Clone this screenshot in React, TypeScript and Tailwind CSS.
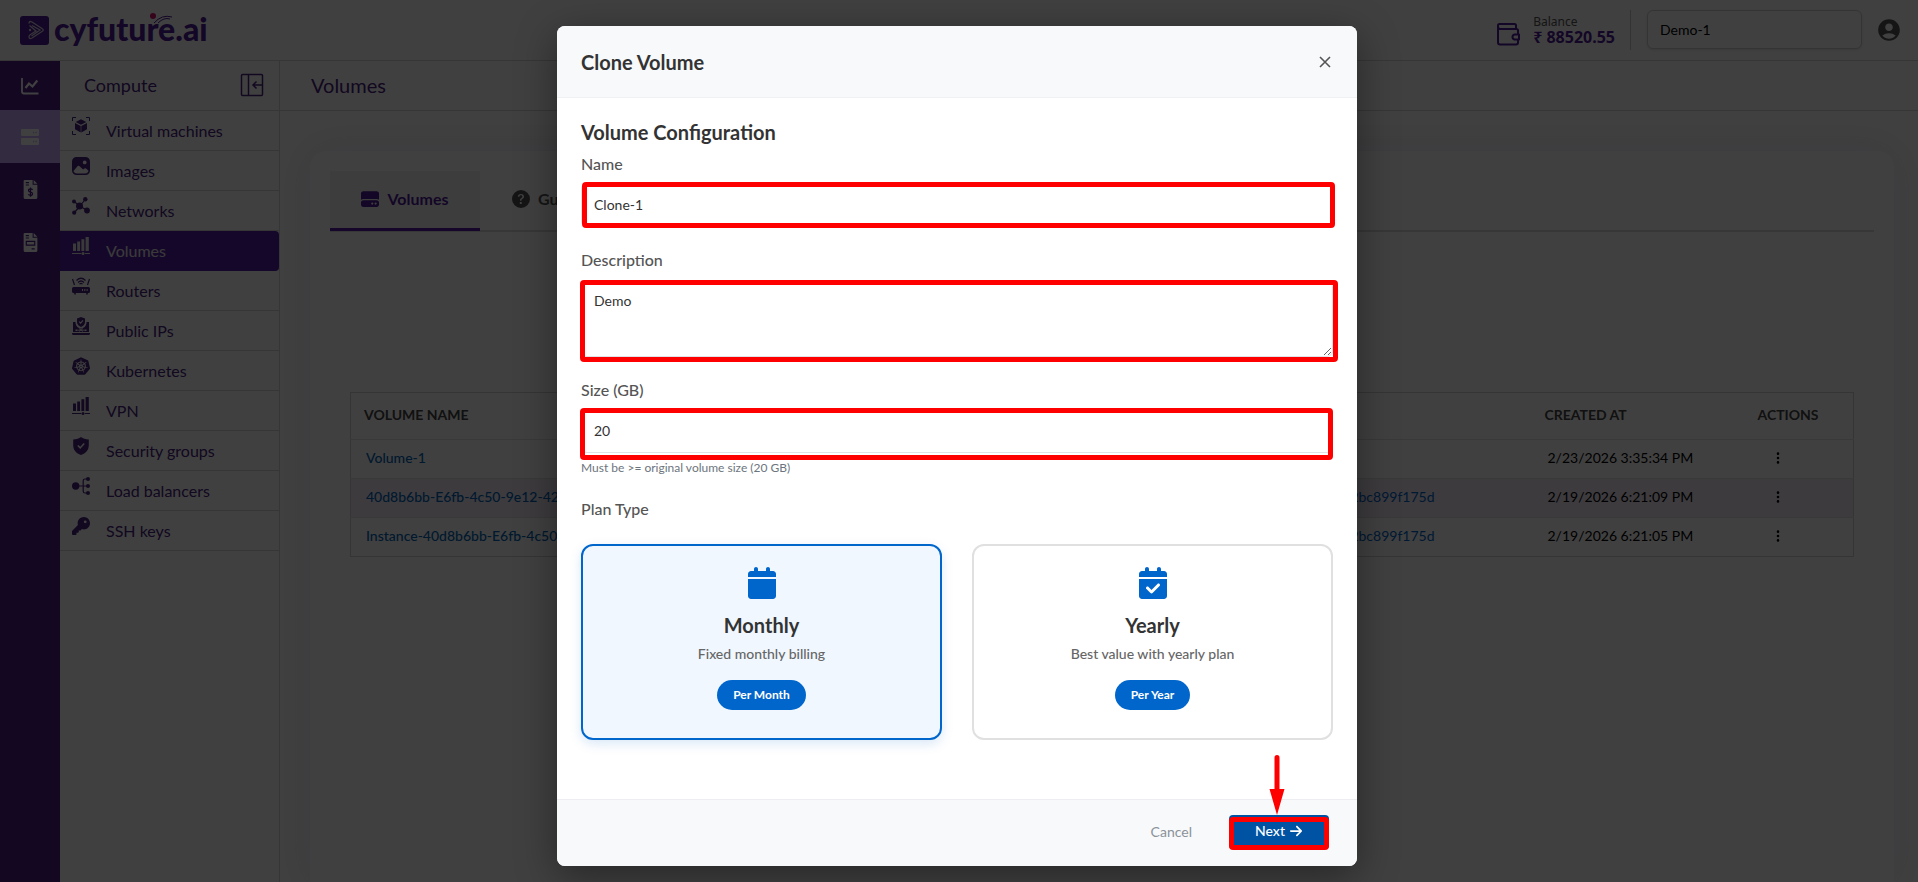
import type { ReactNode } from "react";
import { BsThreeDotsVertical, BsQuestionCircleFill } from "react-icons/bs";
import { FaArrowRight, FaCalendar, FaCalendarCheck, FaHardDrive, FaKey } from "react-icons/fa6";
import { MdAccountCircle } from "react-icons/md";
import { SiKubernetes } from "react-icons/si";

function Svg({ children, size = 18 }: { children: ReactNode; size?: number }) {
  return (
    <svg width={size} height={size} viewBox="0 0 18 18" fill="currentColor" aria-hidden="true">
      {children}
    </svg>
  );
}

const line = { fill: "none", stroke: "currentColor", strokeWidth: 1.2 };

const VmIcon = () => (
  <Svg>
    <path d="M.5 4V.5H4M14 .5h3.500V4M17.500 14v3.500H14M4 17.500H.5V14" {...line} strokeWidth={1} />
    <path d="M9 2.200 14.300 5 9 7.800 3.700 5zM3 6l5.700 2.900v6.600L3 12.300zM15 6 9.300 8.900v6.600l5.700-3.200z" />
  </Svg>
);

const ImageIcon = () => (
  <Svg>
    <path
      fillRule="evenodd"
      d="M4.500 0h9A4.500 4.500 0 0 1 18 4.500v9a4.500 4.500 0 0 1-4.500 4.500h-9A4.500 4.500 0 0 1 0 13.500v-9A4.500 4.500 0 0 1 4.500 0zm8.200 3.500a1.900 1.900 0 1 0 0 3.800 1.900 1.900 0 0 0 0-3.800zM1.500 14c.5 1.600 1.500 2.500 3.300 2.500h8.400c1.800 0 2.800-1 3.300-2.700l-2.500-2.300q-.8-.6-1.600 0l-1.300 1-3.800-3.400q-.8-.7-1.600 0z"
    />
  </Svg>
);

const NetworkIcon = () => (
  <Svg>
    <path d="M2 4.500 8 9l5.500-7M8 9l7 4.500M8 9l-6 7" {...line} />
    <circle cx="7.500" cy="9" r="3.500" />
    <circle cx="2" cy="4.500" r="2" />
    <circle cx="13.300" cy="2.200" r="2.200" />
    <circle cx="15" cy="13.500" r="2.900" />
    <circle cx="2.200" cy="15.700" r="2.100" />
  </Svg>
);

const BarsIcon = () => (
  <Svg>
    <path d="M1 6.500h3V14H1zM5.200 4.500h2.900V14H5.200zM9.400 2.200h2.900V14H9.400zM13.600 0h3.200v14h-3.200zM0 16h9v1H0zM13 16h5v1h-5z" />
    <circle cx="11" cy="16.500" r="1.500" />
  </Svg>
);

const RouterIcon = () => (
  <Svg>
    <path d="M.5 2l2 6M17.500 2l-2 6M4.500 3.500q4.500-4.500 9 0M6 5.500q3-3 6 0M7.500 7.200q1.500-1.500 3 0" {...line} />
    <path
      fillRule="evenodd"
      d="M1.500 10h15A1.500 1.500 0 0 1 18 11.500v3a1.500 1.500 0 0 1-1.500 1.500h-.7v1.500h-1.600V16H3.800v1.500H2.200V16h-.7A1.500 1.500 0 0 1 0 14.500v-3A1.500 1.500 0 0 1 1.500 10zM10 12v2h1v-2zm2.300 0v2h1v-2zm2.300 0v2h1v-2z"
    />
  </Svg>
);

const PublicIpIcon = () => (
  <Svg>
    <path d="M9 0l4 1.500V5c0 2.300-1.500 4-4 5-2.500-1-4-2.700-4-5V1.500z" />
    <path d="M7.200 4.700l1.400 1.400 2.400-2.700" fill="none" stroke="#fff" strokeWidth="1.100" />
    <path d="M1 5h2.500v1.200c.4 3 2.700 5 5.500 5.500 2.800-.5 5.100-2.500 5.500-5.500V5H17v10H1zM0 16h18v.5a1.500 1.500 0 0 1-1.500 1.500h-15A1.500 1.500 0 0 1 0 16.500z" />
    <path d="M5.500 13.200h7M7 11.500l4 3M11 11.500l-4 3" fill="none" stroke="#fff" strokeWidth=".8" />
    <path d="M3.500 12.500h2v1.400h-2zM12.500 12.500h2v1.400h-2z" fill="#fff" />
  </Svg>
);

const ShieldIcon = () => (
  <Svg>
    <path d="M9 0c2 1.600 4.500 2.300 7.800 2.400V8c0 5-3 8.300-7.800 10C4.200 16.300 1.200 13 1.200 8V2.400C4.500 2.300 7 1.600 9 0z" />
    <path d="M5.800 8.500l2.400 2.400 4-4.500" fill="none" stroke="#fff" strokeWidth="1.500" />
  </Svg>
);

const BalancerIcon = () => (
  <Svg>
    <path d="M4 9h12M16 2h-3q-1.800 0-1.800 1.800v10.400q0 1.800 1.800 1.800h3" {...line} />
    <circle cx="3.700" cy="9" r="3.700" />
    <circle cx="16" cy="2" r="2" />
    <circle cx="16" cy="9" r="2" />
    <circle cx="16" cy="16" r="2" />
  </Svg>
);

const FileIcon = ({ money }: { money?: boolean }) => (
  <Svg size={19}>
    <path
      fillRule="evenodd"
      d="M3.500 0H11v4.500h4.500V16.500A1.500 1.500 0 0 1 14 18H4a1.500 1.500 0 0 1-1.500-1.500V1A1 1 0 0 1 3.500 0zM4.500 2v1h3V2zm0 2.200v1h3v-1zM12 0l3.500 3.500H12z"
    />
    {money ? (
      <path d="M11 9.300q-.7-1-2-1-1.900 0-1.900 1.500T9 11.400t1.900 1.600T9 14.500q-1.400 0-2.100-1M9 7v8.800" fill="none" stroke="#4e1a86" strokeWidth="1.200" />
    ) : (
      <path d="M5 8h8v3.500H5zM10 15h3" fill="none" stroke="#4e1a86" strokeWidth="1.100" />
    )}
  </Svg>
);

const menu = [
  { label: "Virtual machines", icon: <VmIcon /> },
  { label: "Images", icon: <ImageIcon /> },
  { label: "Networks", icon: <NetworkIcon /> },
  { label: "Volumes", icon: <BarsIcon />, active: true },
  { label: "Routers", icon: <RouterIcon /> },
  { label: "Public IPs", icon: <PublicIpIcon /> },
  { label: "Kubernetes", icon: <SiKubernetes size={18} /> },
  { label: "VPN", icon: <BarsIcon /> },
  { label: "Security groups", icon: <ShieldIcon /> },
  { label: "Load balancers", icon: <BalancerIcon /> },
  { label: "SSH keys", icon: <FaKey size={18} /> },
];

const rows = [
  { name: "Volume-1", server: "", created: "2/23/2026 3:35:34 PM" },
  {
    name: "40d8b6bb-E6fb-4c50-9e12-42bc899f175d",
    server: "2bc899f175d",
    created: "2/19/2026 6:21:09 PM",
  },
  {
    name: "Instance-40d8b6bb-E6fb-4c50-9e12-42bc899f175d",
    server: "2bc899f175d",
    created: "2/19/2026 6:21:05 PM",
  },
];

function Header() {
  return (
    <header className="flex h-[61px] items-center border-t border-b border-t-white border-b-[#d8d8d8] pl-5 pr-[18px]">
      <a href="#" className="flex items-center gap-[5px] text-[#4e1a96]" aria-label="cyfuture.ai">
        <svg width="29" height="29" viewBox="0 0 29 29" aria-hidden="true">
          <rect width="29" height="29" rx="3" fill="currentColor" />
          <path
            d="M9 7.500q0-3 3-1.500l10 6.500q2.500 1.500 0 3L12 22q-3 1.500-3-1.200 0-1.300 1.500-2.300L16 15 9.500 9.500M12 9.500l8 4.500-8.500 6"
            fill="none"
            stroke="#d8d0e4"
            strokeWidth="1.300"
          />
          <circle cx="10" cy="14" r="1.200" fill="#d8d0e4" />
        </svg>
        <span className="relative pb-1 text-[32px] leading-[40px] font-black">
          cyfuture.ai
          <svg width="28" height="12" viewBox="0 0 28 12" className="absolute top-[3px] left-[95px]" aria-hidden="true">
            <circle cx="4" cy="4" r="3" fill="#d0106c" />
            <path d="M5 11q8-9 18-6M9 11q6-6 12-4" fill="none" stroke="currentColor" strokeWidth="1" />
          </svg>
        </span>
      </a>
      <div className="ml-auto flex items-center pb-[2px]">
        <svg width="24" height="24" viewBox="0 0 24 24" fill="none" stroke="#4e1a96" strokeWidth="2" strokeLinejoin="round" className="mt-2 mr-[13px]" aria-hidden="true">
          <path d="M20 6.500V3.500Q20 2 18.500 2H3.500Q2 2 2 3.500V20.500Q2 22.500 4 22.500H20Q22 22.500 22 20.500V18M2 4.500Q2 7 4.500 7H20.500Q22 7 22 8.500V12" />
          <path d="M23 12.500v5h-4.500q-2-.5-2-2.500t2-2.500z" />
        </svg>
        <div className="mr-[15px] font-['Noto_Sans',sans-serif]">
          <div className="text-xs leading-[14px] text-[#555]">Balance</div>
          <div className="text-base leading-4 font-bold text-[#4e1a96]">₹ 88520.55</div>
        </div>
        <div className="mr-4 h-10 border-l border-[#ccc]" />
        <select aria-label="Project" className="mr-4 h-[39px] w-[215px] appearance-none rounded-md border border-[#d0d0d0] bg-white px-3 text-sm text-black shadow-sm">
          <option>Demo-1</option>
        </select>
        <button type="button" aria-label="Account">
          <MdAccountCircle size={26} color="#555" className="-mx-[2px]" />
        </button>
      </div>
    </header>
  );
}

function Rail() {
  return (
    <nav aria-label="Sections" className="flex w-[60px] shrink-0 flex-col bg-[#521c88] text-white">
      <a href="#" aria-label="Dashboard" className="flex h-[49px] items-center justify-center">
        <Svg>
          <path d="M1 1v13.500q0 2 2 2h14.500" fill="none" stroke="currentColor" strokeWidth="1.800" />
          <path d="M4.500 11l3.500-4.500 3.500 3 4.800-6" fill="none" stroke="currentColor" strokeWidth="2.200" />
        </Svg>
      </a>
      <a href="#" aria-label="Compute" className="flex h-[53px] items-center justify-center bg-[#cbaafa]">
        <Svg>
          <path
            fillRule="evenodd"
            d="M1 1h16a1 1 0 0 1 1 1v5a1 1 0 0 1-1 1H1a1 1 0 0 1-1-1V2a1 1 0 0 1 1-1zm11 2.700v1.500h1.200V3.700zm2.500 0v1.500h1.200V3.700zM1 10h16a1 1 0 0 1 1 1v5a1 1 0 0 1-1 1H1a1 1 0 0 1-1-1v-5a1 1 0 0 1 1-1zm11 2.700v1.500h1.200v-1.500zm2.500 0v1.500h1.200v-1.500z"
          />
        </Svg>
      </a>
      <a href="#" aria-label="Billing" className="flex h-[53px] items-center justify-center">
        <FileIcon money />
      </a>
      <a href="#" aria-label="Reports" className="flex h-[53px] items-center justify-center">
        <FileIcon />
      </a>
    </nav>
  );
}

function Sidebar() {
  return (
    <aside className="w-[220px] shrink-0 border-r border-[#d8d8d8] text-[#48227e]">
      <div className="flex h-[50px] items-center justify-between border-b border-[#d8d8d8] pr-[15px] pb-[2px] pl-6">
        <span className="text-lg">Compute</span>
        <button type="button" aria-label="Collapse menu">
          <svg width="24" height="24" viewBox="0 0 24 24" fill="none" stroke="currentColor" strokeWidth="1.500" aria-hidden="true">
            <rect x="1.500" y="1.500" width="21" height="21" rx="1" />
            <path d="M8.500 1.500v21M22 12h-9M16.500 8.500 13 12l3.500 3.500" />
          </svg>
        </button>
      </div>
      <ul>
        {menu.map((item) => (
          <li key={item.label}>
            <a
              href="#"
              className={
                item.active
                  ? "flex h-10 gap-4 rounded-r border-b border-[#561fa6] bg-[#561fa6] pl-3 text-[#e8e8e8]"
                  : "flex h-10 gap-4 border-b border-[#d8d8d8] pl-3"
              }
            >
              <span className="pt-[6px]">{item.icon}</span>
              <span className="pt-2 text-base leading-6">{item.label}</span>
            </a>
          </li>
        ))}
      </ul>
    </aside>
  );
}

function VolumesPage() {
  return (
    <main className="flex flex-1 flex-col">
      <h1 className="flex h-[50px] items-center border-b border-[#d8d8d8] pb-[2px] pl-[31px] text-xl text-[#48227e]">Volumes</h1>
      <div className="flex flex-1 flex-col overflow-hidden pt-10 pr-6 pl-[30px]">
        <div className="flex-1 rounded-t-2xl px-5 pt-5 shadow-[0_0_40px_rgba(85,26,168,0.12)]">
          <div className="flex h-[61px] border-b-2 border-[#dcdcdc] font-bold">
            <button type="button" className="flex h-[60px] w-[150px] items-center justify-center gap-2 border-b-3 border-[#551aa8] bg-[#f3f2f8] pb-[2px] text-[#4e1a96]">
              <FaHardDrive size={18} />
              Volumes
            </button>
            <button type="button" className="flex h-[60px] items-center gap-2 px-8 pb-[5px] text-[#555]">
              <BsQuestionCircleFill size={18} />
              Guide
            </button>
          </div>
          <div className="px-5 pt-40">
            <table className="w-full table-fixed border border-[#d2d2d2] text-left text-sm text-black">
              <colgroup>
                <col className="w-[48%]" />
                <col />
                <col className="w-[213px]" />
                <col className="w-24" />
              </colgroup>
              <thead>
                <tr className="h-[47px] text-[#444]">
                  <th className="pb-[2px] pl-[13px] font-bold">VOLUME NAME</th>
                  <th className="pb-[2px] font-bold">INSTANCE</th>
                  <th className="pb-[2px] font-bold">CREATED AT</th>
                  <th className="pb-[2px] font-bold">ACTIONS</th>
                </tr>
              </thead>
              <tbody>
                {rows.map((row) => (
                  <tr key={row.name} className="h-[39px] border-t border-[#e4e4e4] even:bg-[#f2eaf8]">
                    <td className="truncate pb-[2px] pl-[15px] font-medium text-[#0066b8]">
                      <a href="#">{row.name}</a>
                    </td>
                    <td className="pr-[110px] pb-[2px] text-right text-[#0066cc]">
                      <a href="#">{row.server}</a>
                    </td>
                    <td className="pb-[2px] pl-[3px]">{row.created}</td>
                    <td className="pb-[2px] pl-[13px]">
                      <button type="button" aria-label={`Actions for ${row.name}`} className="block">
                        <BsThreeDotsVertical size={14} />
                      </button>
                    </td>
                  </tr>
                ))}
              </tbody>
            </table>
          </div>
        </div>
      </div>
    </main>
  );
}

function PlanCard({ title, text, badge, icon, selected }: { title: string; text: string; badge: string; icon: ReactNode; selected?: boolean }) {
  return (
    <button
      type="button"
      aria-pressed={!!selected}
      className={
        selected
          ? "flex h-[196px] flex-1 flex-col items-center rounded-xl border-2 border-[#0066cc] bg-[#f0f7ff] pt-[21px] shadow-[0_4px_12px_rgba(0,102,204,0.15)]"
          : "flex h-[196px] flex-1 flex-col items-center rounded-xl border-2 border-[#e0e0e0] bg-white pt-[21px]"
      }
    >
      <span className="text-[#0066cc]">{icon}</span>
      <span className="mt-[14px] text-xl leading-6 font-bold text-[#333]">{title}</span>
      <span className="mt-[7px] text-sm leading-5 font-medium text-[#666]">{text}</span>
      <span className="mt-4 rounded-full bg-[#0066cc] px-4 text-xs leading-[30px] font-bold text-white">{badge}</span>
    </button>
  );
}

// red frame drawn over a control
const frame = "pointer-events-none absolute rounded-sm border-5 border-[#ff0000]";
const label = "block text-base leading-6 font-medium text-[#555]";
const field = "block w-full rounded-md border border-[#e0e2e6] bg-white px-3 text-sm text-[#333] outline-none";

function CloneDialog() {
  return (
    <div className="absolute inset-0 flex items-start justify-center bg-black/75 pt-[26px] pr-1">
      <section role="dialog" aria-labelledby="title" className="w-[800px] rounded-lg bg-white shadow-[0_10px_40px_rgba(0,0,0,0.4)]">
        <div className="flex h-[72px] items-center justify-between rounded-t-lg border-b border-[#f0f1f3] bg-[#f8f9fb] px-6">
          <h2 id="title" className="text-xl font-bold text-[#333]">Clone Volume</h2>
          <button type="button" aria-label="Close" className="p-[2px] text-[#555]">
            <svg width="12" height="12" viewBox="0 0 12 12" stroke="currentColor" strokeWidth="1.600" aria-hidden="true">
              <path d="M1 1l10 10M11 1 1 11" />
            </svg>
          </button>
        </div>
        <form className="px-6 pt-[22px] pb-[59px]">
          <h3 className="text-xl leading-6 font-bold text-[#333]">Volume Configuration</h3>
          <label htmlFor="name" className={`${label} mt-2`}>Name</label>
          <div className="relative mt-[7px]">
            <input id="name" defaultValue="Clone-1" className={`${field} h-[44px] pb-[2px]`} />
            <div className={`${frame} -inset-y-px left-px -right-[2px]`} />
          </div>
          <label htmlFor="description" className={`${label} mt-[21px]`}>Description</label>
          <div className="relative mt-[9px]">
            <textarea id="description" defaultValue="Demo" className={`${field} h-[76px] pt-[9px]`} />
            <div className={`${frame} -top-px -bottom-[5px] -left-px -right-[5px]`} />
          </div>
          <label htmlFor="size" className={`${label} mt-[21px]`}>Size (GB)</label>
          <div className="relative mt-[7px]">
            <input id="size" defaultValue="20" aria-describedby="size-help" className={`${field} h-[44px] pb-[2px]`} />
            <div className={`${frame} -top-px -bottom-[7px] -left-px right-0`} />
          </div>
          <p id="size-help" className="mt-[7px] text-xs leading-4 text-[#6c757d]">Must be &gt;= original volume size (20 GB)</p>
          <p className={`${label} mt-[21px]`}>Plan Type</p>
          <div className="mt-[23px] flex gap-[30px]">
            <PlanCard title="Monthly" text="Fixed monthly billing" badge="Per Month" icon={<FaCalendar size={32} />} selected />
            <PlanCard title="Yearly" text="Best value with yearly plan" badge="Per Year" icon={<FaCalendarCheck size={32} />} />
          </div>
        </form>
        <div className="flex h-[67px] items-center justify-end rounded-b-lg border-t border-[#eceef1] bg-[#f8f9fb] pr-7 pb-[2px]">
          <button type="button" className="mr-[37px] text-sm text-[#8a929a]">Cancel</button>
          <div className="relative">
            <button type="button" className="flex h-[34px] w-[100px] items-center justify-center gap-1 rounded bg-[#0052a3] pb-[2px] text-sm font-medium text-white">
              Next
              <FaArrowRight size={14} />
            </button>
            <div className={`${frame} top-[2px] -bottom-px inset-x-0`} />
            <svg width="16" height="60" viewBox="0 0 16 60" fill="#ff0000" className="absolute bottom-full left-10" aria-hidden="true">
              <path d="M5.500 2.500a2.500 2.500 0 0 1 5 0V34h5L8 60 .5 34h5z" />
            </svg>
          </div>
        </div>
      </section>
    </div>
  );
}

export default function App() {
  return (
    <div className="relative flex min-h-screen flex-col bg-white font-['Lato',sans-serif]">
      <Header />
      <div className="flex flex-1">
        <Rail />
        <Sidebar />
        <VolumesPage />
      </div>
      <CloneDialog />
    </div>
  );
}
